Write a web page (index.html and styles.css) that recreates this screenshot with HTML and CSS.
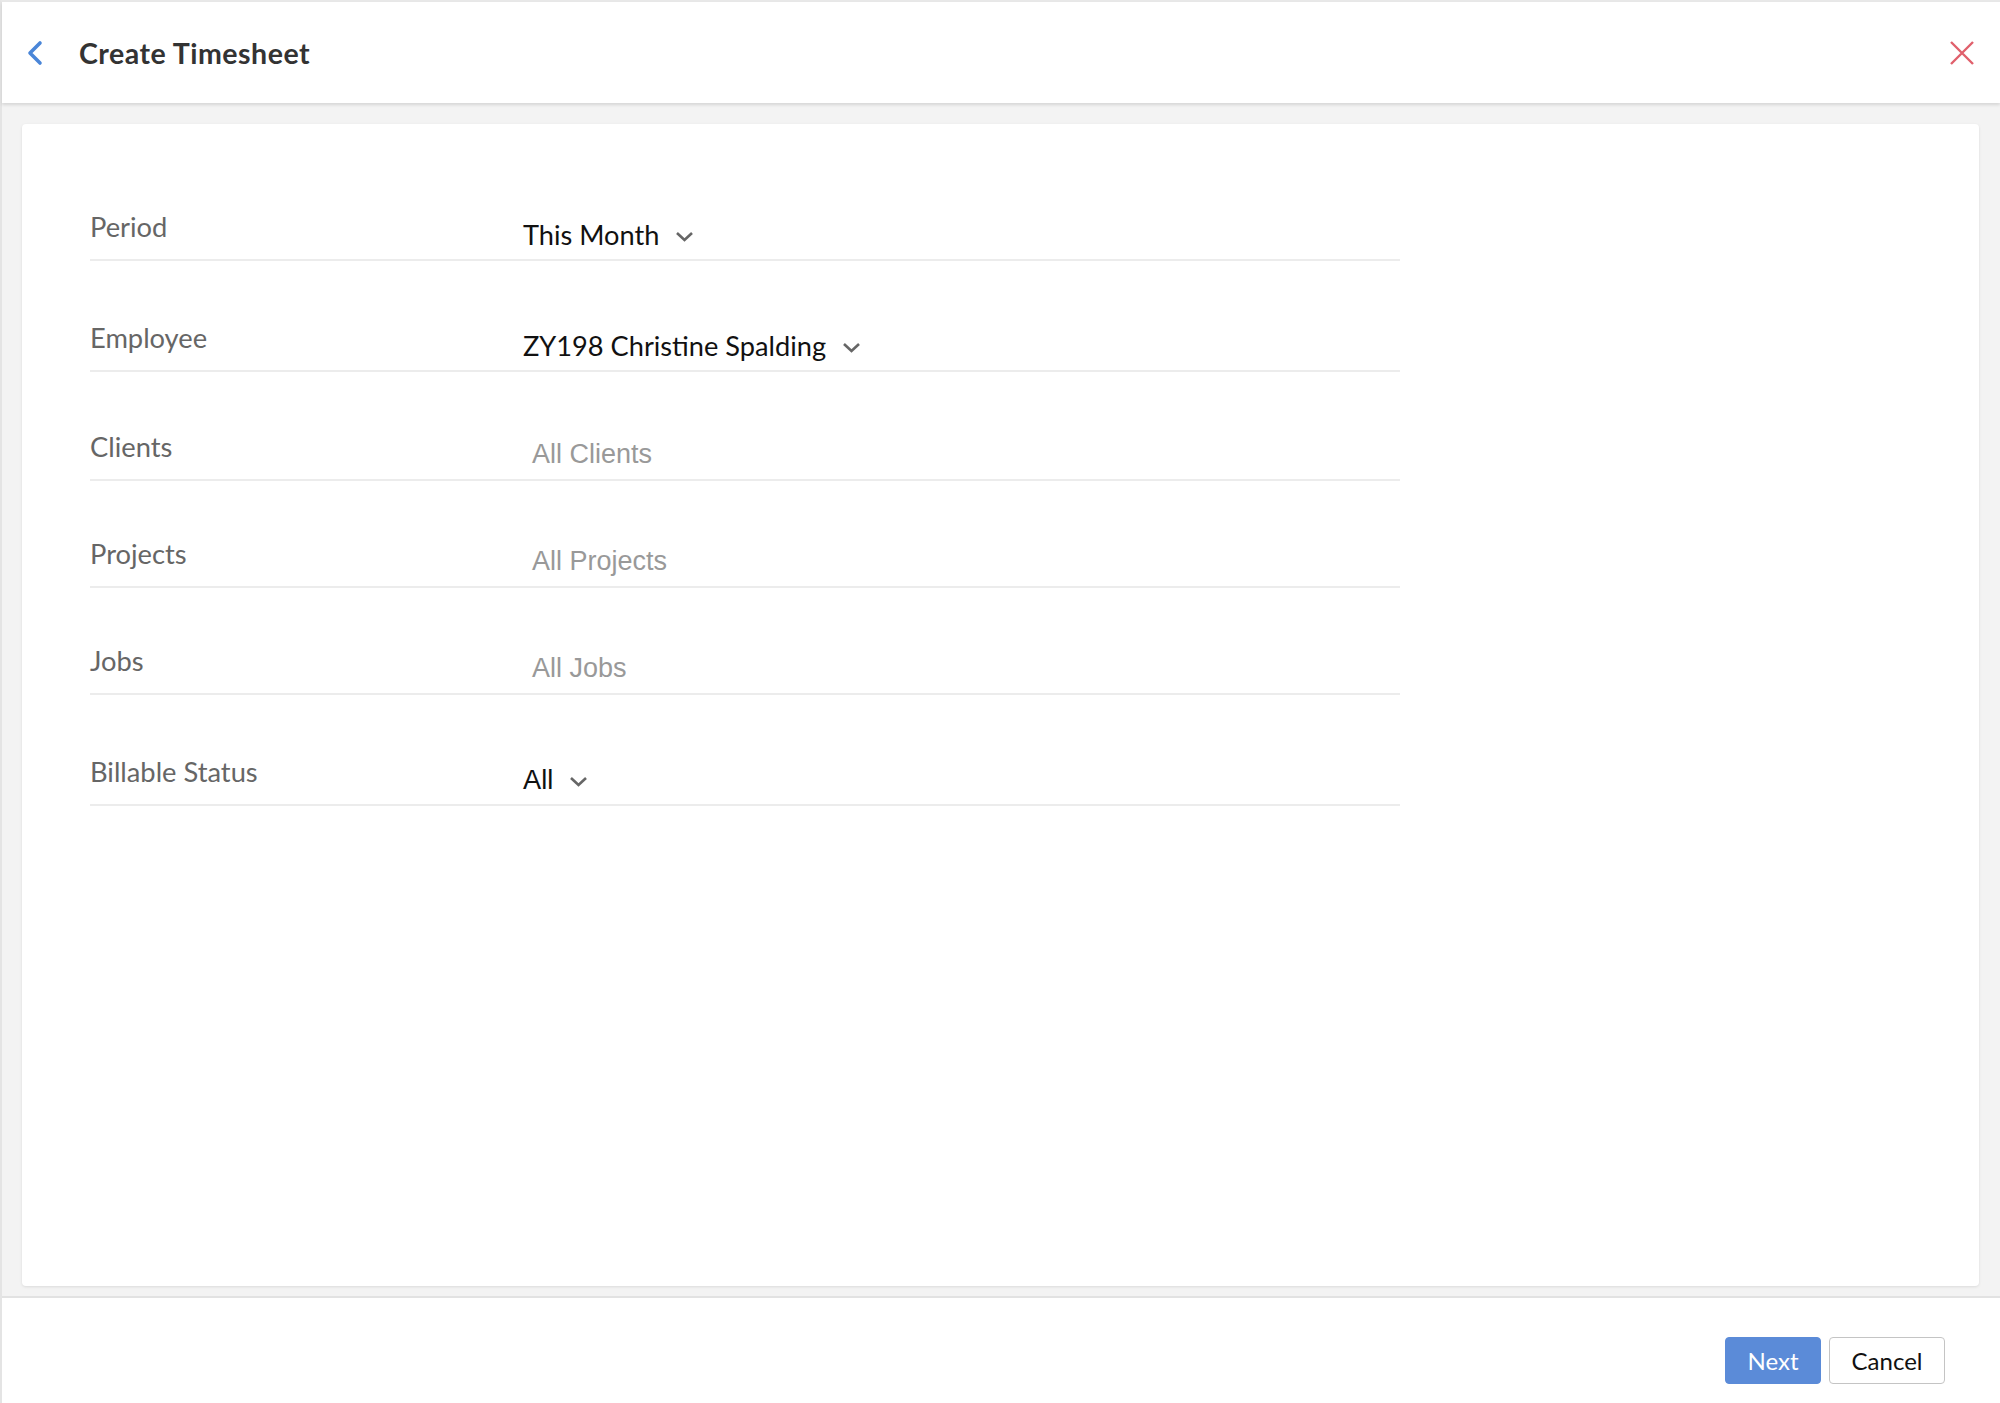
FILE: index.html
```html
<!DOCTYPE html>
<html lang="en">
<head>
    <meta charset="UTF-8">
    <meta name="viewport" content="width=device-width, initial-scale=1.0">
    <title>Create Timesheet</title>
    <link rel="stylesheet" href="styles.css">
</head>
<body>
    <div class="page">
        <div class="header">
            <svg class="back" width="18" height="26" viewBox="0 0 18 26">
                <path d="M14 3 L4 13 L14 23" fill="none" stroke="#4a86d8" stroke-width="3.6" stroke-linecap="round" stroke-linejoin="round"/>
            </svg>
            <h1 class="title">Create Timesheet</h1>
            <svg class="close" width="26" height="26" viewBox="0 0 26 26">
                <path d="M2 2 L24 24 M24 2 L2 24" fill="none" stroke="#e0606c" stroke-width="2.4"/>
            </svg>
        </div>

        <div class="content">
            <div class="card">
                <div class="row tall">
                    <div class="label">Period</div>
                    <div class="value">This Month
                        <svg class="caret" width="19" height="11" viewBox="0 0 19 11"><path d="M2 2 L9.5 9 L17 2" fill="none" stroke="#666" stroke-width="2.6"/></svg>
                    </div>
                </div>
                <div class="row tall">
                    <div class="label">Employee</div>
                    <div class="value">ZY198 Christine Spalding
                        <svg class="caret" width="19" height="11" viewBox="0 0 19 11"><path d="M2 2 L9.5 9 L17 2" fill="none" stroke="#666" stroke-width="2.6"/></svg>
                    </div>
                </div>
                <div class="row mid">
                    <div class="label">Clients</div>
                    <div class="placeholder">All Clients</div>
                </div>
                <div class="row">
                    <div class="label">Projects</div>
                    <div class="placeholder">All Projects</div>
                </div>
                <div class="row">
                    <div class="label">Jobs</div>
                    <div class="placeholder">All Jobs</div>
                </div>
                <div class="row tall">
                    <div class="label">Billable Status</div>
                    <div class="value plain">All
                        <svg class="caret" width="19" height="11" viewBox="0 0 19 11"><path d="M2 2 L9.5 9 L17 2" fill="none" stroke="#666" stroke-width="2.6"/></svg>
                    </div>
                </div>
            </div>
        </div>

        <div class="footer">
            <button class="btn primary">Next</button>
            <button class="btn">Cancel</button>
        </div>
    </div>
</body>
</html>
```

FILE: styles.css
```css
body {
    margin: 0;
    font-family: Lato, "Open Sans", sans-serif;
    background-color: #ffffff;
}

.page {
    height: 1403px;
    display: flex;
    flex-direction: column;
    box-sizing: border-box;
    border-left: 2px solid #e4e4e4;
    border-top: 2px solid #e8e8e8;
}

.header {
    height: 101px;
    flex-shrink: 0;
    display: flex;
    align-items: center;
    padding: 0 25px 0 24px;
    background-color: #fff;
    box-shadow: 0 2px 3px rgba(0, 0, 0, 0.12);
    position: relative;
    z-index: 1;
}

.back {
    display: block;
}

.title {
    margin: 0 0 0 35px;
    font-size: 28.5px;
    font-weight: 700;
    letter-spacing: 0.5px;
    color: #333;
}

.close {
    display: block;
    margin-left: auto;
}

.content {
    flex: 1;
    display: flex;
    background-color: #f3f3f3;
    padding: 21px 21px 10px 20px;
}

.card {
    flex: 1;
    background-color: #fff;
    border-radius: 4px;
    box-shadow: 0 1px 3px rgba(0, 0, 0, 0.1);
    padding: 26px 0 0 68px;
}

.row {
    width: 1310px;
    height: 107px;
    box-sizing: border-box;
    display: flex;
    align-items: flex-end;
    border-bottom: 2px solid #ececec;
}

.row.tall {
    height: 111px;
}

.row.mid {
    height: 109px;
}

.label {
    width: 433px;
    flex-shrink: 0;
    font-size: 27.3px;
    line-height: 32px;
    color: #666;
    padding-bottom: 16px;
}

.value {
    display: flex;
    align-items: center;
    font-size: 27.2px;
    line-height: 32px;
    color: #111;
    padding-bottom: 8px;
}

.value.plain {
    font-family: "Liberation Sans", Arial, sans-serif;
}

.caret {
    display: block;
    margin-left: 16px;
    margin-top: 2px;
}

.placeholder {
    font-family: "Liberation Sans", Arial, sans-serif;
    font-size: 27px;
    line-height: 32px;
    color: #999;
    padding: 0 0 9px 9px;
}

.footer {
    height: 107px;
    box-sizing: border-box;
    flex-shrink: 0;
    border-top: 2px solid #e2e2e2;
    display: flex;
    justify-content: flex-end;
    align-items: flex-start;
    gap: 8px;
    padding: 39px 55px 0 0;
}

.btn {
    height: 47px;
    width: 116px;
    font-family: Lato, sans-serif;
    font-size: 24px;
    color: #111;
    background-color: #fff;
    border: 1.5px solid #c4c4c4;
    border-radius: 4px;
    cursor: pointer;
}

.btn.primary {
    width: 96px;
    color: #fff;
    background-color: #5b8bd8;
    border-color: #5b8bd8;
}
```
